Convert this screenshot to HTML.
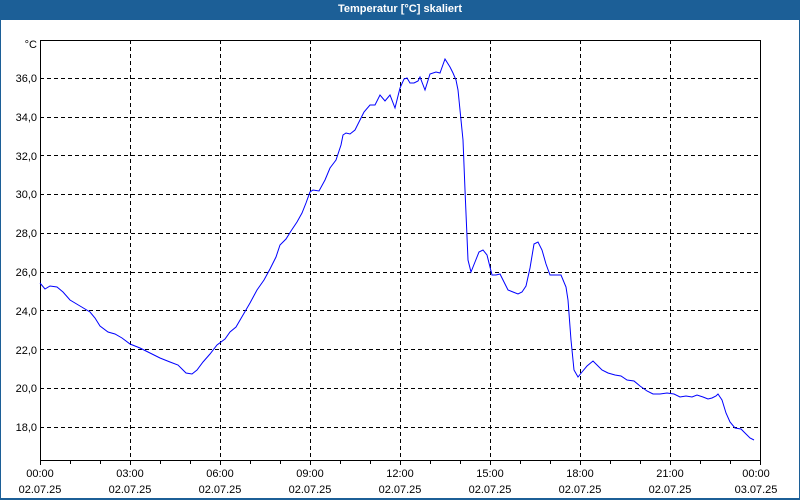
<!DOCTYPE html>
<html><head><meta charset="utf-8"><style>
html,body{margin:0;padding:0;background:#fff;width:800px;height:500px;overflow:hidden}
#w{position:absolute;left:0;top:0;width:798px;height:498px;border:1px solid #1c5f97;border-top:none;border-bottom:2px solid #1c5f97}
#t{position:absolute;left:0;top:0;width:800px;height:20px;background:#1c5f97;color:#fff;font:bold 11px "Liberation Sans",sans-serif;text-align:center;line-height:19px}
svg{position:absolute;left:0;top:0}
text{font-family:"Liberation Sans",sans-serif;font-size:11px;fill:#000}
</style></head><body>
<div id="w"></div>
<div id="t">Temperatur [°C] skaliert</div>
<svg width="800" height="500">
<g stroke="#000" stroke-width="1" stroke-dasharray="4,3" shape-rendering="crispEdges">
<line x1="40" y1="427.5" x2="760" y2="427.5"/><line x1="40" y1="388.5" x2="760" y2="388.5"/>
<line x1="40" y1="349.5" x2="760" y2="349.5"/><line x1="40" y1="310.5" x2="760" y2="310.5"/>
<line x1="40" y1="272.5" x2="760" y2="272.5"/><line x1="40" y1="233.5" x2="760" y2="233.5"/>
<line x1="40" y1="194.5" x2="760" y2="194.5"/><line x1="40" y1="155.5" x2="760" y2="155.5"/>
<line x1="40" y1="117.5" x2="760" y2="117.5"/><line x1="40" y1="78.5" x2="760" y2="78.5"/>
<line x1="130.5" y1="40" x2="130.5" y2="460"/><line x1="220.5" y1="40" x2="220.5" y2="460"/>
<line x1="310.5" y1="40" x2="310.5" y2="460"/><line x1="400.5" y1="40" x2="400.5" y2="460"/>
<line x1="490.5" y1="40" x2="490.5" y2="460"/><line x1="580.5" y1="40" x2="580.5" y2="460"/>
<line x1="670.5" y1="40" x2="670.5" y2="460"/>
</g>
<g stroke="#000" stroke-width="1" fill="none" shape-rendering="crispEdges">
<polyline points="40.5,40 40.5,460.5 760.5,460.5 760.5,40"/>
<line x1="40" y1="40.5" x2="760" y2="40.5"/>
<path d="M40.5 460v5M70.5 460v4M100.5 460v4M130.5 460v5M160.5 460v4M190.5 460v4M220.5 460v5M250.5 460v4M280.5 460v4M310.5 460v5M340.5 460v4M370.5 460v4M400.5 460v5M430.5 460v4M460.5 460v4M490.5 460v5M520.5 460v4M550.5 460v4M580.5 460v5M610.5 460v4M640.5 460v4M670.5 460v5M700.5 460v4M730.5 460v4M760.5 460v5"/>
</g>
<polyline fill="none" stroke="#0000ff" stroke-width="1" points="40,283 45,289 50,286 57,287 63,292 70,300 80,306 90,312 95,318 100,326 108,332 115,334 122,338 130,344 140,348 150,353 160,358 170,362 178,365 182,369 186,373 192,374 197,370 203,362 210,354 217,345 225,339 230,332 236,327 243,315 250,303 257,290 264,280 270,269 276,257 280,245 286,239 291,231 297,222 302,213 306,203 310,192 313,190 319,191 325,180 330,168 336,160 341,145 343,135 346,133 350,134 355,130 360,120 364,112 370,105 375,105 380,95 385,101 390,95 395,108 400,88 404,79 407,78 410,83 414,83 418,81 420,77 425,90 430,74 436,72 440,73 445,59 450,67 453,73 456,80 458,90 460,110 463,140 465,190 468,260 471,272 475,262 479,252 483,250 487,255 492,275 496,275 500,274 504,282 508,290 513,292 518,294 522,292 526,286 530,268 534,244 538,242 542,250 546,264 550,275 556,275 561,275 566,287 568,300 571,340 574,370 578,377 582,372 587,366 593,361 597,365 602,370 608,373 615,375 621,376 627,380 634,381 640,386 647,391 653,394 660,394 667,393 674,394 680,397 686,396 692,397 697,395 703,397 708,399 712,398 716,396 718,394 722,400 726,413 730,422 735,428 741,429 746,434 750,438 754,440"/>
<g text-anchor="end">
<text x="37" y="48">°C</text>
<text x="37" y="82">36,0</text><text x="37" y="121">34,0</text><text x="37" y="160">32,0</text>
<text x="37" y="198">30,0</text><text x="37" y="237">28,0</text><text x="37" y="276">26,0</text>
<text x="37" y="315">24,0</text><text x="37" y="354">22,0</text><text x="37" y="392">20,0</text>
<text x="37" y="431">18,0</text>
</g>
<g text-anchor="middle">
<text x="40" y="477">00:00</text><text x="40" y="493">02.07.25</text>
<text x="130" y="477">03:00</text><text x="130" y="493">02.07.25</text>
<text x="220" y="477">06:00</text><text x="220" y="493">02.07.25</text>
<text x="310" y="477">09:00</text><text x="310" y="493">02.07.25</text>
<text x="400" y="477">12:00</text><text x="400" y="493">02.07.25</text>
<text x="490" y="477">15:00</text><text x="490" y="493">02.07.25</text>
<text x="580" y="477">18:00</text><text x="580" y="493">02.07.25</text>
<text x="670" y="477">21:00</text><text x="670" y="493">02.07.25</text>
<text x="756" y="477">00:00</text><text x="756" y="493">03.07.25</text>
</g>
</svg>
</body></html>
